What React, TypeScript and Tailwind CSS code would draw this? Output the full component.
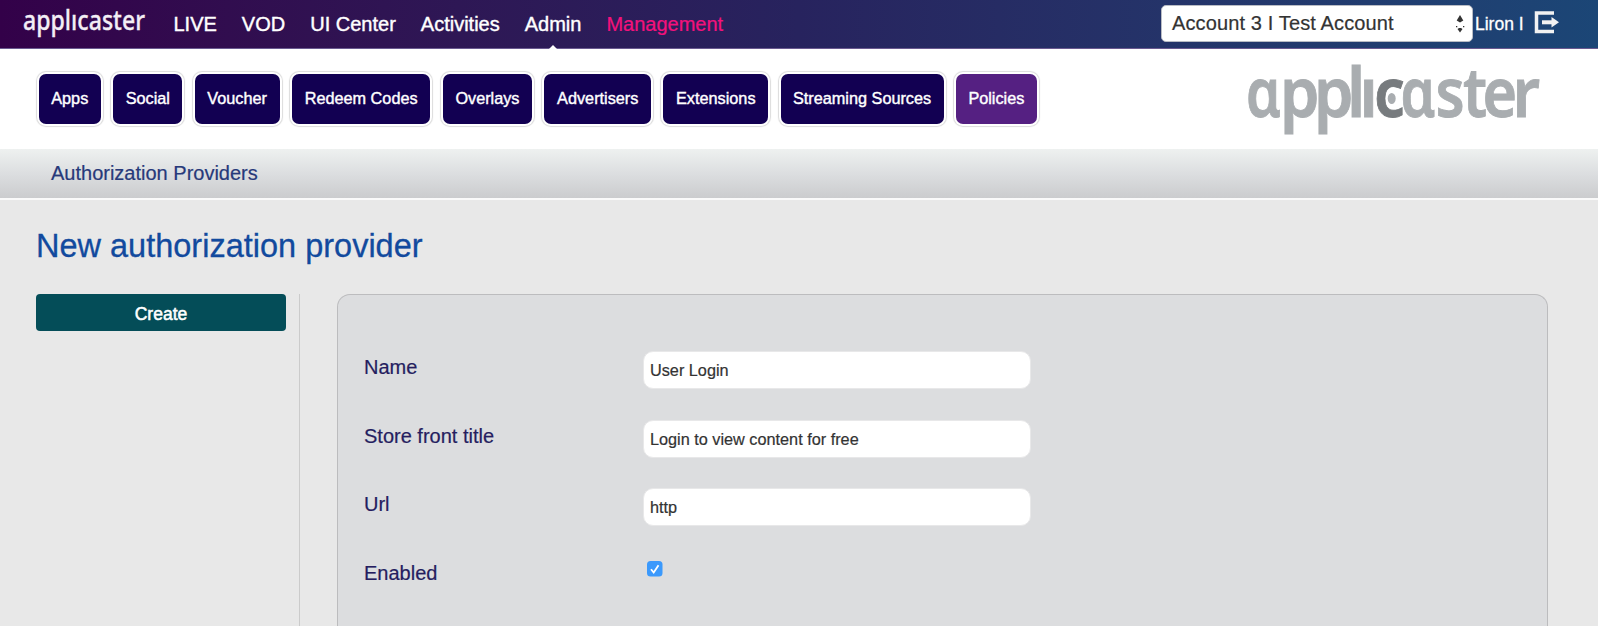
import { Fragment } from "react";

const mainNav = ["LIVE", "VOD", "UI Center", "Activities", "Admin", "Management"];

const sections = [
  { label: "Apps", width: "w-[62.5px]" },
  { label: "Social", width: "w-[69px]" },
  { label: "Voucher", width: "w-[85px]" },
  { label: "Redeem Codes", width: "w-[138.5px]" },
  { label: "Overlays", width: "w-[89.5px]" },
  { label: "Advertisers", width: "w-[106.5px]" },
  { label: "Extensions", width: "w-[105px]" },
  { label: "Streaming Sources", width: "w-[163px]" },
  { label: "Policies", width: "w-[81px]", active: true },
];

const fields = [
  { label: "Name", value: "User Login" },
  { label: "Store front title", value: "Login to view content for free" },
  { label: "Url", value: "http" },
];

type Glyph = { ch: string; x: number; w: number; dark?: boolean };

const glyphs: Glyph[] = [
  { ch: "ɑ", x: -2, w: 0.8 },
  { ch: "p", x: 32, w: 0.93 },
  { ch: "p", x: 66, w: 0.93 },
  { ch: "l", x: 99, w: 0.95 },
  { ch: "ı", x: 111.5, w: 0.95 },
  { ch: "c", x: 126, w: 0.9, dark: true },
  { ch: "ɑ", x: 152.5, w: 0.8 },
  { ch: "s", x: 187.5, w: 0.87 },
  { ch: "t", x: 215, w: 0.87 },
  { ch: "e", x: 234.5, w: 0.87 },
  { ch: "r", x: 264.5, w: 0.93 },
];

function BrandLogo() {
  return (
    <svg width="300" height="80" viewBox="0 0 300 80" aria-label="applicaster" className="overflow-visible font-['Noto_Sans',sans-serif] text-[68px] font-semibold">
      {glyphs.map((g, i) => (
        <text
          key={i}
          transform={`translate(${g.x} 57) scale(${g.w} 1)`}
          fill={g.dark ? "#777b7e" : "#a9adb0"}
          stroke={g.dark ? "#777b7e" : "#a9adb0"}
          strokeWidth="0.9"
        >
          {g.ch}
        </text>
      ))}
      <ellipse cx="143.7" cy="38.5" rx="5" ry="6.500" fill="#a9adb0" stroke="#fff" strokeWidth="2" />
    </svg>
  );
}

function SmallLogo() {
  return (
    <svg width="124" height="40" viewBox="0 0 124 40" className="overflow-visible font-['Noto_Sans',sans-serif] text-[27px] font-medium" aria-label="applicaster">
      <text x="0" y="30" textLength="122" lengthAdjust="spacingAndGlyphs" fill="#f3eef5" stroke="#f3eef5" strokeWidth="0.3">
        applıcaster
      </text>
    </svg>
  );
}

export default function App() {
  return (
    <div className="flex h-[626px] w-[1598px] flex-col overflow-hidden bg-[#e8e8e8] font-['Liberation_Sans',Arial,sans-serif]">
      <header className="flex h-[49px] shrink-0 items-start border-b border-[#6a5a90] bg-linear-to-r from-[#330149] via-[#27235e] to-[#1b4676] pl-[23px]">
        <SmallLogo />
        <nav className="ml-[26.5px] flex h-[48px] gap-[25px] text-[20px] leading-[48px] text-white [-webkit-text-stroke:0.4px]">
          {mainNav.map((item) => (
            <a key={item} className={item === "Management" ? "text-[#f4117c] [-webkit-text-stroke:0.2px]" : "relative"}>
              {item}
              {item === "Admin" && (
                <svg className="absolute bottom-[-1px] left-1/2 -ml-[4px]" width="8" height="4" viewBox="0 0 8 4">
                  <path d="M0 4 4 0 8 4Z" fill="#fff" />
                </svg>
              )}
            </a>
          ))}
        </nav>
        <div className="ml-auto flex">
          <div className="mt-[5px] flex h-[37px] w-[312px] items-center justify-between rounded-[5px] border border-[#b9bcc4] bg-white pr-[7px] pl-[10px] text-[20px] leading-[35px] text-[#333]">
            <span className="tracking-[0.13px] [-webkit-text-stroke:0.2px]">Account 3 I Test Account</span>
            <svg width="10" height="18" viewBox="0 0 10 18" fill="#333">
              <path d="M5 0 8.300 5.500 5 7.500 1.700 5.500Z" />
              <path d="M4 13h2l1.500 1L5 17.500 2.500 14Z" />
              <path d="M1 11h1.300v1.300H1zM8 11h1.300v1.300H8z" />
            </svg>
          </div>
          <span className="ml-[2px] w-[50px] text-[17.5px] leading-[48px] whitespace-nowrap text-white [-webkit-text-stroke:0.3px]">Liron I</span>
          <svg className="mt-[11px] mr-[38px] ml-[9px]" width="26" height="23" viewBox="0 0 26 23" fill="none" stroke="#f2f2f2">
            <path d="M20 2H2.500V20.500H20" strokeWidth="3.500" />
            <path d="M8 11.300H19" strokeWidth="4" />
            <path d="M17.500 6 25 11.300 17.500 16.500Z" fill="#f2f2f2" stroke="none" />
          </svg>
        </div>
      </header>

      <div className="flex h-[100px] shrink-0 justify-between bg-white pt-[24.5px] pr-[50px] pl-[38.500px]">
        <div className="flex gap-[12.3px]">
          {sections.map((s) => (
            <a
              key={s.label}
              className={`${s.width} ${s.active ? "bg-[#552082]" : "bg-[#120052]"} flex h-[50px] items-center justify-center rounded-[7px] pb-[1.500px] text-[16.25px] whitespace-nowrap text-white shadow-[0_0_0_2px_#fff,0_0_1px_3px_#dcdcdc] [-webkit-text-stroke:0.4px]`}
            >
              {s.label}
            </a>
          ))}
        </div>
        <div className="-mt-[13.5px]">
          <BrandLogo />
        </div>
      </div>

      <div className="h-[51px] shrink-0 border-b-2 border-[#fafafa] bg-linear-to-b from-[#eef1f0] via-[#dcdee0] to-[#cbccce] pl-[51px] text-[20px] leading-[48px] text-[#27397a] [-webkit-text-stroke:0.2px]">
        Authorization Providers
      </div>

      <h1 className="mt-[27px] h-[38px] shrink-0 pl-[36px] text-[32.5px] leading-[38px] text-[#124a9e] [-webkit-text-stroke:0.3px]">New authorization provider</h1>

      <main className="mt-[29px] flex min-h-0 flex-1 pl-[36px]">
        <aside className="w-[264px] border-r border-[#cbcbcb]">
          <button className="block h-[37px] w-[250px] rounded-[4px] bg-[#044d58] pt-[3px] text-[17.5px] text-white [-webkit-text-stroke:0.5px]">Create</button>
        </aside>
        <section className="ml-[37px] grid w-[1211px] grid-cols-[279px_388px] content-start rounded-t-[13px] border border-b-0 border-[#bcbcbe] bg-[#dcdddf] pt-[55.8px] pl-[26px]">
          {fields.map((f) => (
            <Fragment key={f.label}>
              <label className="h-[68.75px] text-[20px] leading-[32px] text-[#251d60] [-webkit-text-stroke:0.2px]">{f.label}</label>
              <input
                defaultValue={f.value}
                className="h-[38px] w-[388px] rounded-[10px] border border-[#e8e8e9] bg-white px-[6px] pt-[1px] text-[16.25px] text-[#333] outline-none [-webkit-text-stroke:0.2px]"
              />
            </Fragment>
          ))}
          <label className="text-[20px] leading-[32px] text-[#251d60] [-webkit-text-stroke:0.2px]">Enabled</label>
          <svg className="mt-[4px] ml-[4px]" width="16" height="16" viewBox="0 0 16 16" role="checkbox" aria-checked="true">
            <rect x="0" y="0" width="15.500" height="15.500" rx="3.500" fill="#3b99fc" />
            <path d="M4 8.200 6.700 11.500 11.500 4.200" fill="none" stroke="#fff" strokeWidth="1.800" />
          </svg>
        </section>
      </main>
    </div>
  );
}
